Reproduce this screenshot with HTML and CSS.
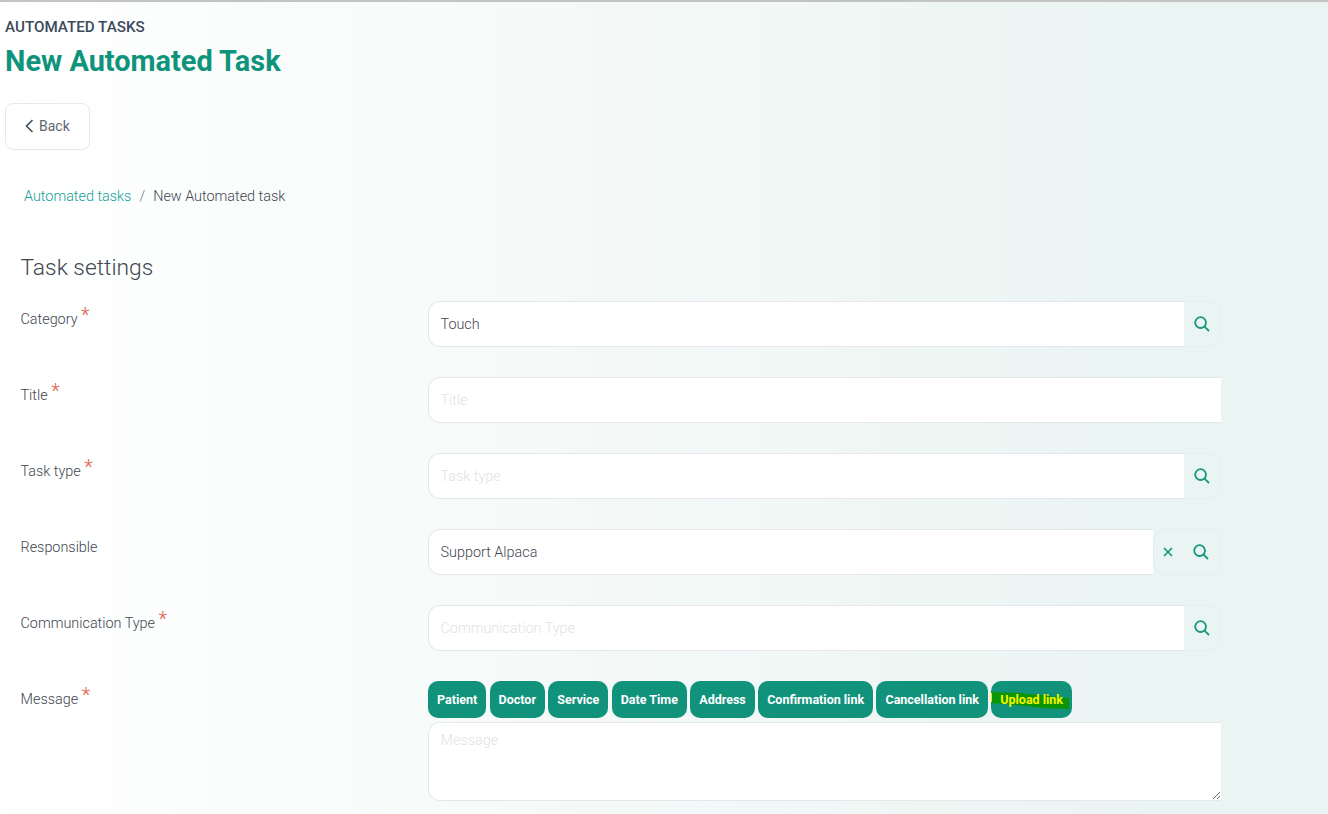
FILE: index.html
```html
<!DOCTYPE html>
<html lang="en">
<head>
<meta charset="utf-8">
<title>New Automated Task</title>
<link rel="stylesheet" href="styles.css">
</head>
<body>
<svg class="sprite" width="0" height="0" aria-hidden="true">
  <symbol id="search" viewBox="0 0 16 16"><circle cx="6.6" cy="6.6" r="5.4" fill="none" stroke="currentColor" stroke-width="1.8"/><path d="M10.6 10.6 15 15" fill="none" stroke="currentColor" stroke-width="1.8"/></symbol>
  <symbol id="close" viewBox="0 0 10 10"><path d="M1 1 9 9M9 1 1 9" fill="none" stroke="currentColor" stroke-width="1.7"/></symbol>
</svg>
<main class="page">
  <header class="page-head">
    <div class="eyebrow">AUTOMATED TASKS</div>
    <h1 class="title">New Automated Task</h1>
    <button class="back" type="button">
      <svg class="back-icon" viewBox="0 0 9 14" width="9" height="14"><path d="M7.5 1 1.5 7l6 6" fill="none" stroke="currentColor" stroke-width="1.6"/></svg>
      <span>Back</span>
    </button>
  </header>
  <nav class="crumbs"><a class="crumb-link">Automated tasks</a><span class="crumb-sep">/</span><span>New Automated task</span></nav>
  <h2 class="section">Task settings</h2>
  <form class="form">
    <div class="row">
      <label class="label">Category<span class="req">*</span></label>
      <div class="field">
        <input class="input" type="text" value="Touch" placeholder="Category">
        <div class="addon"><svg class="icon" width="16" height="16"><use href="#search"/></svg></div>
      </div>
    </div>
    <div class="row">
      <label class="label">Title<span class="req">*</span></label>
      <div class="field"><input class="input" type="text" placeholder="Title"></div>
    </div>
    <div class="row">
      <label class="label">Task type<span class="req">*</span></label>
      <div class="field">
        <input class="input" type="text" placeholder="Task type">
        <div class="addon"><svg class="icon" width="16" height="16"><use href="#search"/></svg></div>
      </div>
    </div>
    <div class="row">
      <label class="label">Responsible</label>
      <div class="field">
        <input class="input" type="text" value="Support Alpaca" placeholder="Responsible">
        <div class="addon addon-wide"><svg class="icon-x" width="10" height="10"><use href="#close"/></svg><svg class="icon" width="16" height="16"><use href="#search"/></svg></div>
      </div>
    </div>
    <div class="row">
      <label class="label">Communication Type<span class="req">*</span></label>
      <div class="field">
        <input class="input" type="text" placeholder="Communication Type">
        <div class="addon"><svg class="icon" width="16" height="16"><use href="#search"/></svg></div>
      </div>
    </div>
    <div class="row row-message">
      <label class="label">Message<span class="req">*</span></label>
      <div class="message">
        <div class="chips">
          <button class="chip" type="button">Patient</button>
          <button class="chip" type="button">Doctor</button>
          <button class="chip" type="button">Service</button>
          <button class="chip" type="button">Date Time</button>
          <button class="chip" type="button">Address</button>
          <button class="chip" type="button">Confirmation link</button>
          <button class="chip" type="button">Cancellation link</button>
          <button class="chip chip-marked" type="button">
            <svg class="marker" viewBox="0 0 81 37" width="81" height="37" aria-hidden="true"><path d="M0 11 28 12 78 17V28L52 27 26 24 0 22Z" fill="#0b9502"/><path d="M-1 12H1V21H-1Z" fill="#e6e600"/></svg>
            <span class="chip-text">Upload link</span>
          </button>
        </div>
        <textarea class="textarea" placeholder="Message"></textarea>
      </div>
    </div>
  </form>
</main>
</body>
</html>
```
FILE: styles.css
```css
* { box-sizing: border-box; }
html, body { height: 100%; }
body {
  margin: 0;
  overflow: hidden;
  font-family: Roboto, "Liberation Sans", sans-serif;
  color: #495057;
  background: linear-gradient(90deg, #ffffff 0%, #eaf4f2 88%);
  border-top: 2px solid #c2c4c4;
}
.sprite { position: absolute; }
.page { padding: 0 107px 0 5px; }
.page-head { padding-top: 15px; }
.eyebrow {
  font-size: 15.2px;
  line-height: 20px;
  font-weight: 500;
  color: #3b4a5c;
}
.title {
  margin: 6px 0 0;
  font-size: 28.9px;
  line-height: 36px;
  font-weight: 700;
  color: #0f947c;
}
.back {
  display: flex;
  align-items: center;
  gap: 5px;
  margin-top: 24px;
  width: 85px;
  height: 47px;
  padding: 0 0 2px 19px;
  font: 400 14px Roboto, sans-serif;
  color: #5c6773;
  background: #fff;
  border: 1px solid #e6e9ec;
  border-radius: 8px;
}
.back-icon { color: #3f4d5f; }
.crumbs {
  margin: 38px 0 0 19px;
  font-size: 14.4px;
  line-height: 18px;
  font-weight: 300;
  color: #3f4650;
}
.crumb-link { color: #14a098; }
.crumb-sep { margin: 0 8px; color: #6c757d; }
.section {
  margin: 48px 0 0 15.5px;
  font-size: 22.8px;
  line-height: 28px;
  font-weight: 300;
  color: #3f4650;
}
.form { margin: 19px 0 0 15.5px; }
.row {
  display: grid;
  grid-template-columns: 407.5px 793px;
  margin-bottom: 30px;
}
.label {
  padding-top: 10px;
  font-size: 14.4px;
  line-height: 18px;
  font-weight: 300;
  color: #3f4650;
}
.req {
  margin-left: 3.5px;
  font-size: 20px;
  line-height: 0;
  vertical-align: 2px;
  color: #e2604c;
}
.field { display: flex; height: 46px; }
.input {
  flex: 1;
  min-width: 0;
  padding: 0 11.5px;
  font: 300 14.4px Roboto, sans-serif;
  color: #3f4650;
  background: #fff;
  border: 1px solid #e4e8ec;
  border-right: 0;
  border-radius: 12px 0 0 12px;
  outline: 0;
}
.input::placeholder, .textarea::placeholder { color: #dfe3e7; opacity: 1; }
.addon {
  display: flex;
  align-items: center;
  justify-content: center;
  width: 37px;
  color: #14987f;
  border: 1px solid #e4eeee;
  border-left: 0;
  border-radius: 0 12px 12px 0;
}
.addon-wide {
  width: 68px;
  justify-content: flex-start;
  gap: 20px;
  padding-left: 9px;
  border-left: 1px solid #e4eeee;
  border-radius: 12px;
}
.icon { display: block; margin-right: 1px; }
.icon-x { display: block; }
.row-message { margin-bottom: 0; }
.chips { display: flex; gap: 3.35px; }
.chip {
  position: relative;
  height: 37px;
  padding: 0 9px;
  font: 700 12.5px Roboto, sans-serif;
  color: #fff;
  background: #10927b;
  border: 0;
  border-radius: 10px;
  white-space: nowrap;
}
.marker { position: absolute; left: 0; top: 0; }
.chip-text { position: relative; color: #f2f200; }
.textarea {
  display: block;
  width: 100%;
  height: 79px;
  margin-top: 4px;
  padding: 9px 11.5px;
  font: 300 14.4px Roboto, sans-serif;
  background: #fff;
  border: 1px solid #e4e8ec;
  border-right: 0;
  border-radius: 12px 0 0 12px;
  outline: 0;
}
```
